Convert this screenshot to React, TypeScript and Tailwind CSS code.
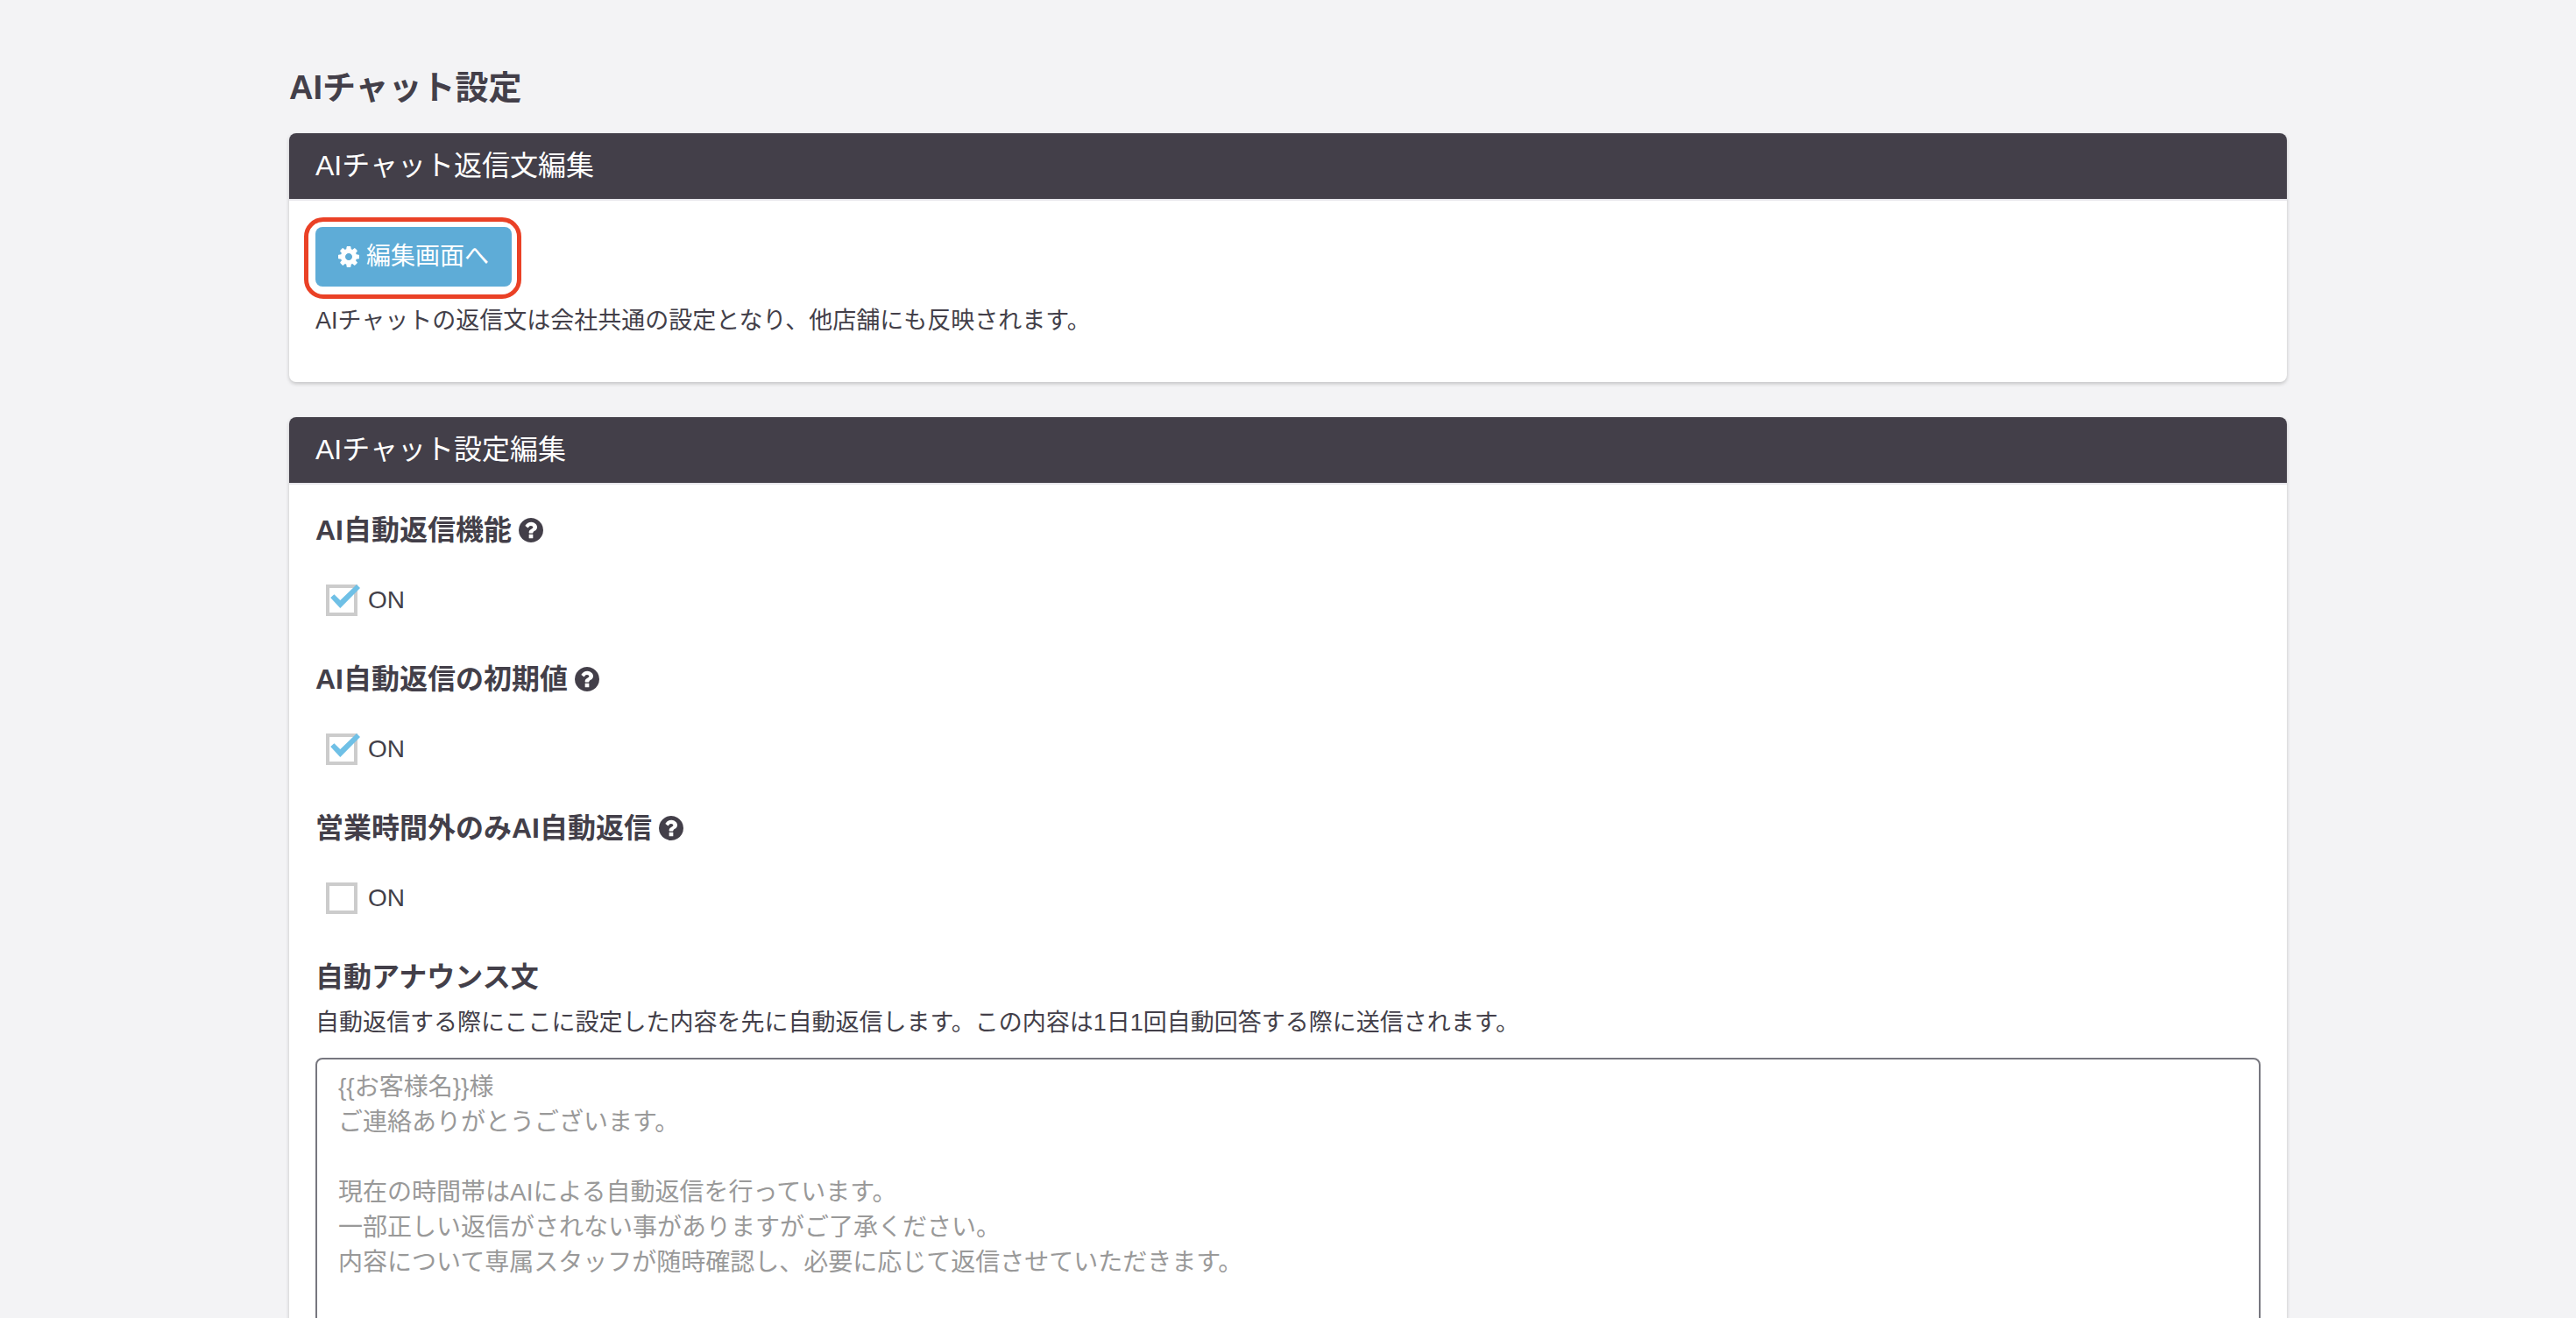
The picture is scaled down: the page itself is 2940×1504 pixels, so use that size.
import React, { useState } from 'react';

const ANNOUNCE_PLACEHOLDER = [
  '{{お客様名}}様',
  'ご連絡ありがとうございます。',
  '',
  '現在の時間帯はAIによる自動返信を行っています。',
  '一部正しい返信がされない事がありますがご了承ください。',
  '内容について専属スタッフが随時確認し、必要に応じて返信させていただきます。',
].join('\n');

const TOGGLES = [
  { id: 'auto-reply', title: 'AI自動返信機能', on: true },
  { id: 'auto-reply-default', title: 'AI自動返信の初期値', on: true },
  { id: 'off-hours-only', title: '営業時間外のみAI自動返信', on: false },
];

export default function App() {
  return (
    <div className="min-h-screen bg-[#f3f3f5] px-6 pt-[72px] font-['Liberation_Sans','Noto_Sans_CJK_JP',sans-serif] text-[#433f49]">
      <main className="mx-auto max-w-[2280px]">
        <h1 className="mb-6 text-[38px] leading-14 font-bold">AIチャット設定</h1>

        <Panel title="AIチャット返信文編集">
          <div className="px-[30px] pt-[30px] pb-[50px]">
            <div className="relative w-fit">
              <button
                type="button"
                className="flex h-[68px] items-center gap-2 rounded-lg bg-[#5eacd7] px-[26px] text-[28px] leading-10 text-white"
              >
                <CogIcon />
                編集画面へ
              </button>
              {/* Highlight frame */}
              <div className="pointer-events-none absolute -top-[11px] -right-[11px] -bottom-[14px] -left-[13px] rounded-[22px] border-5 border-[#ea4126]" />
            </div>
            <p className="mt-[19px] text-[27px] leading-10">
              AIチャットの返信文は会社共通の設定となり、他店舗にも反映されます。
            </p>
          </div>
        </Panel>

        <Panel title="AIチャット設定編集">
          <div className="px-[30px] pt-7 pb-12">
            {TOGGLES.map((t) => (
              <ToggleField key={t.id} id={t.id} title={t.title} initial={t.on} />
            ))}

            <label htmlFor="announce" className="block text-[32px] leading-12 font-bold">
              自動アナウンス文
            </label>
            <p className="mt-2 text-[27px] leading-10">
              自動返信する際にここに設定した内容を先に自動返信します。この内容は1日1回自動回答する際に送信されます。
            </p>
            <textarea
              id="announce"
              rows={10}
              placeholder={ANNOUNCE_PLACEHOLDER}
              className="mt-5 block w-full resize-none rounded-lg border-2 border-[#77777f] bg-white px-6 py-3 text-[28px] leading-10 placeholder:text-[#999999]"
            />
          </div>
        </Panel>
      </main>
    </div>
  );
}

// Helper Components
const Panel = ({ title, children }: { title: string; children: React.ReactNode }) => (
  <section className="mb-10 overflow-hidden rounded-lg bg-white shadow-[0_2px_4px_rgba(0,0,0,0.2)]">
    <h2 className="border-b-2 border-[#e7e6eb] bg-[#433f49] px-[30px] py-[14px] text-[32px] leading-[47px] text-white">
      {title}
    </h2>
    {children}
  </section>
);

const ToggleField = ({ id, title, initial }: { id: string; title: string; initial: boolean }) => {
  const [on, setOn] = useState(initial);

  return (
    <div className="mb-12">
      <h3 className="flex items-center gap-2 text-[32px] leading-12 font-bold">
        {title}
        <HelpIcon />
      </h3>
      <div className="mt-[38px] ml-3 flex h-9 items-center gap-3">
        <div className="relative size-9">
          <input
            id={id}
            type="checkbox"
            checked={on}
            onChange={(e) => setOn(e.target.checked)}
            className="block size-9 appearance-none border-4 border-[#cccccc] bg-white"
          />
          {on && <CheckMark />}
        </div>
        <label htmlFor={id} className="text-[28px] leading-9">
          ON
        </label>
      </div>
    </div>
  );
};

const CheckMark = () => (
  <svg viewBox="0 0 40 36" className="pointer-events-none absolute top-0 left-0 h-9 w-10" fill="#6fc0e6">
    <polygon points="5.2,15 9.4,11.2 16.3,18 35,0 39,4 16.3,27" />
  </svg>
);

const CogIcon = () => (
  <svg viewBox="128 128 1536 1536" className="size-6" fill="currentColor">
    <path d="M1152 896q0-106-75-181t-181-75-181 75-75 181 75 181 181 75 181-75 75-181zm512-109v222q0 12-8 23t-20 13l-185 28q-19 54-39 91 35 50 107 138 10 12 10 25t-9 23q-27 37-99 108t-94 71q-12 0-26-9l-138-108q-44 23-91 38-16 136-29 186-7 28-36 28h-222q-14 0-24.5-8.5t-11.5-21.5l-28-184q-49-16-90-37l-141 107q-10 9-25 9-14 0-25-11-126-114-165-168-7-10-7-23 0-12 8-23 15-21 51-66.5t54-70.5q-27-50-41-99l-183-27q-13-2-21-12.5t-8-23.5v-222q0-12 8-23t19-13l186-28q14-46 39-92-40-57-107-138-10-12-10-24 0-10 9-23 26-36 98.5-107.5t94.5-71.5q13 0 26 10l138 107q44-23 91-38 16-136 29-186 7-28 36-28h222q14 0 24.5 8.5t11.5 21.5l28 184q49 16 90 37l142-107q9-9 24-9 13 0 25 10 129 119 165 170 7 8 7 22 0 12-8 23-15 21-51 66.5t-54 70.5q26 50 41 98l183 28q13 2 21 12.5t8 23.5z" />
  </svg>
);

const HelpIcon = () => (
  <svg viewBox="128 128 1536 1536" className="size-7" fill="currentColor">
    <path d="M1024 1376v-192q0-14-9-23t-23-9h-192q-14 0-23 9t-9 23v192q0 14 9 23t23 9h192q14 0 23-9t9-23zm256-672q0-88-55.5-163t-138.5-116-170-41q-243 0-371 213-15 24 8 42l132 100q7 6 19 6 16 0 25-12 53-68 86-92 34-24 86-24 48 0 85.5 26t37.5 59q0 38-20 61t-68 45q-63 28-115.5 86.5t-52.5 125.5v36q0 14 9 23t23 9h192q14 0 23-9t9-23q0-19 21.5-49.5t54.5-49.5q32-18 49-28.5t46-35 44.5-48 28-60.5 12.5-81zm384 192q0 209-103 385.5t-279.5 279.5-385.5 103-385.5-103-279.5-279.5-103-385.5 103-385.5 279.5-279.5 385.5-103 385.5 103 279.5 279.5 103 385.5z" />
  </svg>
);
